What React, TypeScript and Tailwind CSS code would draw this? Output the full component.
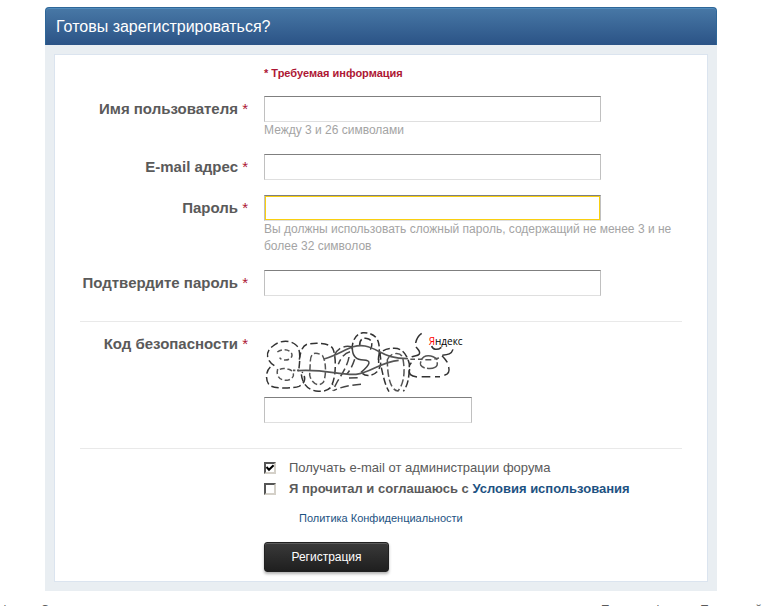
import type { ReactNode } from 'react';

const inputStyle =
  'block h-[26px] w-full border border-t-[#7f7f7f] border-r-[#c0c0c0] border-b-[#dfdfdf] border-l-[#c0c0c0] bg-white px-1 text-[13px] outline-none';

function Required() {
  return <span className="font-normal text-[#ad1634]">*</span>;
}

function Row({ id, label, children }: { id: string; label: string; children: ReactNode }) {
  return (
    <div className="grid grid-cols-[168px_1fr] gap-4">
      <label htmlFor={id} className="pt-1 text-right text-[15px] leading-[18px] font-bold whitespace-nowrap">
        {label} <Required />
      </label>
      <div>{children}</div>
    </div>
  );
}

function Hint({ id, children }: { id: string; children: ReactNode }) {
  return (
    <p id={id} className="text-[12px] leading-[17px] text-[#a4a4a4]">
      {children}
    </p>
  );
}

function Captcha() {
  return (
    <svg
      className="h-[62px] w-[200px]"
      viewBox="27 18 600 186"
      fill="none"
      stroke="#333"
      strokeWidth="4.5"
      role="img"
      aria-label="Код безопасности"
    >
      {/* first digit */}
      <g strokeDasharray="23 10">
        <path d="M58 122C30 103 32 78 54 63C75 45 105 44 123 60C137 71 136 98 131 138" />
        <path d="M46 126C32 139 31 165 42 179C52 192 112 191 132 184C151 176 154 154 141 141" />
      </g>
      <g strokeDasharray="15 8" stroke="#555">
        <path d="M67 81C85 67 112 76 111 91C109 108 80 109 74 98" />
        <path d="M68 132C62 155 77 169 100 165C120 160 121 138 101 133C91 129 76 129 70 137" />
      </g>
      {/* second digit */}
      <g strokeDasharray="22 10">
        <path d="M133 104C137 73 145 57 165 56C190 53 225 55 233 70C243 88 245 151 230 181" />
        <path d="M139 148C142 176 158 196 190 199C209 200 224 195 234 178" />
      </g>
      <path d="M166 108C167 82 182 80 202 91C213 107 215 150 205 172C191 188 168 174 164 150Z" strokeDasharray="18 8" stroke="#555" />
      {/* third digit */}
      <g strokeDasharray="26 11" stroke="#444">
        <path d="M239 90C248 68 270 60 292 66" />
        <path d="M285 80C270 84 257 98 250 118" />
        <path d="M282 96C278 120 262 146 248 168L233 197" />
        <path d="M299 103C293 121 286 135 275 148" />
        <path d="M282 159L318 158M318 178C290 180 262 184 235 197" />
      </g>
      {/* fourth digit */}
      <g strokeDasharray="20 9">
        <path d="M291 73C292 43 304 27 324 23C348 22 367 34 371 55C376 79 370 94 371 114" />
        <path d="M314 62C313 42 326 36 341 42C355 48 352 66 343 79" />
        <path d="M322 145C333 155 353 153 366 140C383 121 377 100 374 82" />
      </g>
      <path d="M292 69C292 94 305 105 326 105C348 106 349 116 318 142" stroke="#444" />
      {/* fifth digit */}
      <g strokeDasharray="22 9">
        <path d="M370 104C370 80 390 70 416 70C443 69 456 89 463 117C463 157 459 180 445 199" />
        <path d="M379 128C386 158 390 180 402 200" />
        <path d="M397 104C405 82 437 80 443 97C450 132 450 172 429 198C405 196 397 150 397 104Z" stroke="#555" />
      </g>
      {/* sixth digit */}
      <path d="M500 25C489 33 484 42 482 54M483 66C491 75 497 80 493 87C488 94 476 92 470 96" />
      <path d="M469 113L463 122M464 132C459 148 468 153 486 156M500 155H526M540 155H555M568 151C584 147 583 134 581 126M577 112C572 104 567 98 561 92" />
      <path d="M530 63C533 74 547 77 559 67M594 73C590 87 579 89 562 91" />
      <path d="M499 105C506 88 531 88 547 104M546 112C551 126 534 133 516 130M509 129C497 124 493 118 498 109" stroke="#555" />
      <path d="M466 103H480M489 103H502M511 104H529M538 102L552 99" stroke="#555" />
      {/* noise lines */}
      <g stroke="#555" strokeWidth="5">
        <path d="M207 102C263 87 286 56 330 63C363 69 374 86 408 95C426 100 442 101 459 101" />
        <path d="M128 137C215 132 244 150 303 148C348 144 377 110 431 106" />
        <path d="M114 136H132" strokeDasharray="7 5" />
      </g>
      <text x="521" y="59" fill="#000" stroke="none" className="font-['Open_Sans',sans-serif] text-[30px]">
        <tspan fill="#f00">Я</tspan>ндекс
      </text>
    </svg>
  );
}

function Check({ id, checked, children }: { id: string; checked?: boolean; children: ReactNode }) {
  return (
    <div className="flex h-[21px] items-center gap-[13px]">
      <span className="grid size-3 shrink-0">
        <input
          id={id}
          type="checkbox"
          defaultChecked={checked}
          className="peer col-start-1 row-start-1 size-3 appearance-none border-2 border-t-[#555] border-r-[#d4d0c8] border-b-[#d4d0c8] border-l-[#555] bg-white"
        />
        <svg
          viewBox="0 0 12 12"
          className="pointer-events-none invisible col-start-1 row-start-1 size-3 peer-checked:visible"
          fill="none"
          stroke="#000"
          strokeWidth="2"
        >
          <path d="M2.5 5L5 7.7L9.6 3.2" />
        </svg>
      </span>
      <label htmlFor={id}>{children}</label>
    </div>
  );
}

export default function App() {
  return (
    <div className="bg-white pt-[7px] font-['Liberation_Sans',Arial,sans-serif] text-[13px] text-[#5a5a5a]">
      <main className="mr-[49px] ml-[45px]">
        <h1 className="h-[38px] rounded-t-[4px] border border-b-0 border-[#2e6698] bg-linear-to-b from-[#4878a6] to-[#2b5386] px-2.5 text-[16px] leading-[37px] text-white shadow-[inset_0_1px_0_#528cbc]">
          Готовы зарегистрироваться?
        </h1>
        <div className="bg-[#e9eef2] p-[9px]">
          <form className="border border-[#dbe4ef] bg-white pt-2.5 pr-2.5 pb-[9px] pl-[25px]" onSubmit={(e) => e.preventDefault()}>
            <p className="ml-[184px] text-[11px] leading-4 font-bold text-[#ad1634]">* Требуемая информация</p>
            <div className="mt-[15px] flex flex-col gap-[15px]">
              <Row id="name" label="Имя пользователя">
                <div className="max-w-[337px]">
                  <input id="name" type="text" aria-describedby="name-hint" className={inputStyle} />
                </div>
                <Hint id="name-hint">Между 3 и 26 символами</Hint>
              </Row>
              <Row id="email" label="E-mail адрес">
                <div className="max-w-[337px]">
                  <input id="email" type="email" className={inputStyle} />
                </div>
              </Row>
              <Row id="password" label="Пароль">
                <div className="max-w-[337px]">
                  <input
                    id="password"
                    type="password"
                    aria-describedby="password-hint"
                    className={`${inputStyle} shadow-[inset_0_0_0_1px_#f9cf10]`}
                  />
                </div>
                <Hint id="password-hint">
                  Вы должны использовать сложный пароль, содержащий не менее 3 и не более 32 символов
                </Hint>
              </Row>
              <Row id="confirm" label="Подтвердите пароль">
                <div className="max-w-[337px]">
                  <input id="confirm" type="password" className={inputStyle} />
                </div>
              </Row>
            </div>

            <hr className="mt-[25px] mr-[15px] mb-[9px] border-[#e9e9e9]" />
            <Row id="code" label="Код безопасности">
              <Captcha />
              <div className="mt-1 max-w-[208px]">
                <input id="code" type="text" className={inputStyle} />
              </div>
            </Row>

            <hr className="mt-[25px] mr-[15px] mb-2 border-[#e9e9e9]" />
            <div className="ml-[184px]">
              <Check id="news" checked>
                Получать e-mail от администрации форума
              </Check>
              <Check id="terms">
                <span className="font-bold">
                  Я прочитал и соглашаюсь с{' '}
                  <a href="#terms" className="text-[#1d5282]">
                    Условия использования
                  </a>
                </span>
              </Check>
              <a href="#privacy" className="mt-[11px] ml-[35px] block w-fit text-[11px] leading-4 text-[#1d5282]">
                Политика Конфиденциальности
              </a>
              <button
                type="submit"
                className="mt-4 block h-[30px] w-[125px] rounded-[3px] border border-[#212121] bg-linear-to-b from-[#3a3a3a] to-[#1f1f1f] text-[12px] text-white shadow-[inset_0_1px_0_#5c5c5c,0_2px_3px_rgba(0,0,0,0.3)]"
              >
                Регистрация
              </button>
            </div>
          </form>
        </div>
      </main>
      <footer className="mt-[11px] flex justify-between pr-1 text-[12px] leading-4 whitespace-nowrap">
        <span>форум Связь</span>
        <span>Правила форума Последний</span>
      </footer>
    </div>
  );
}
